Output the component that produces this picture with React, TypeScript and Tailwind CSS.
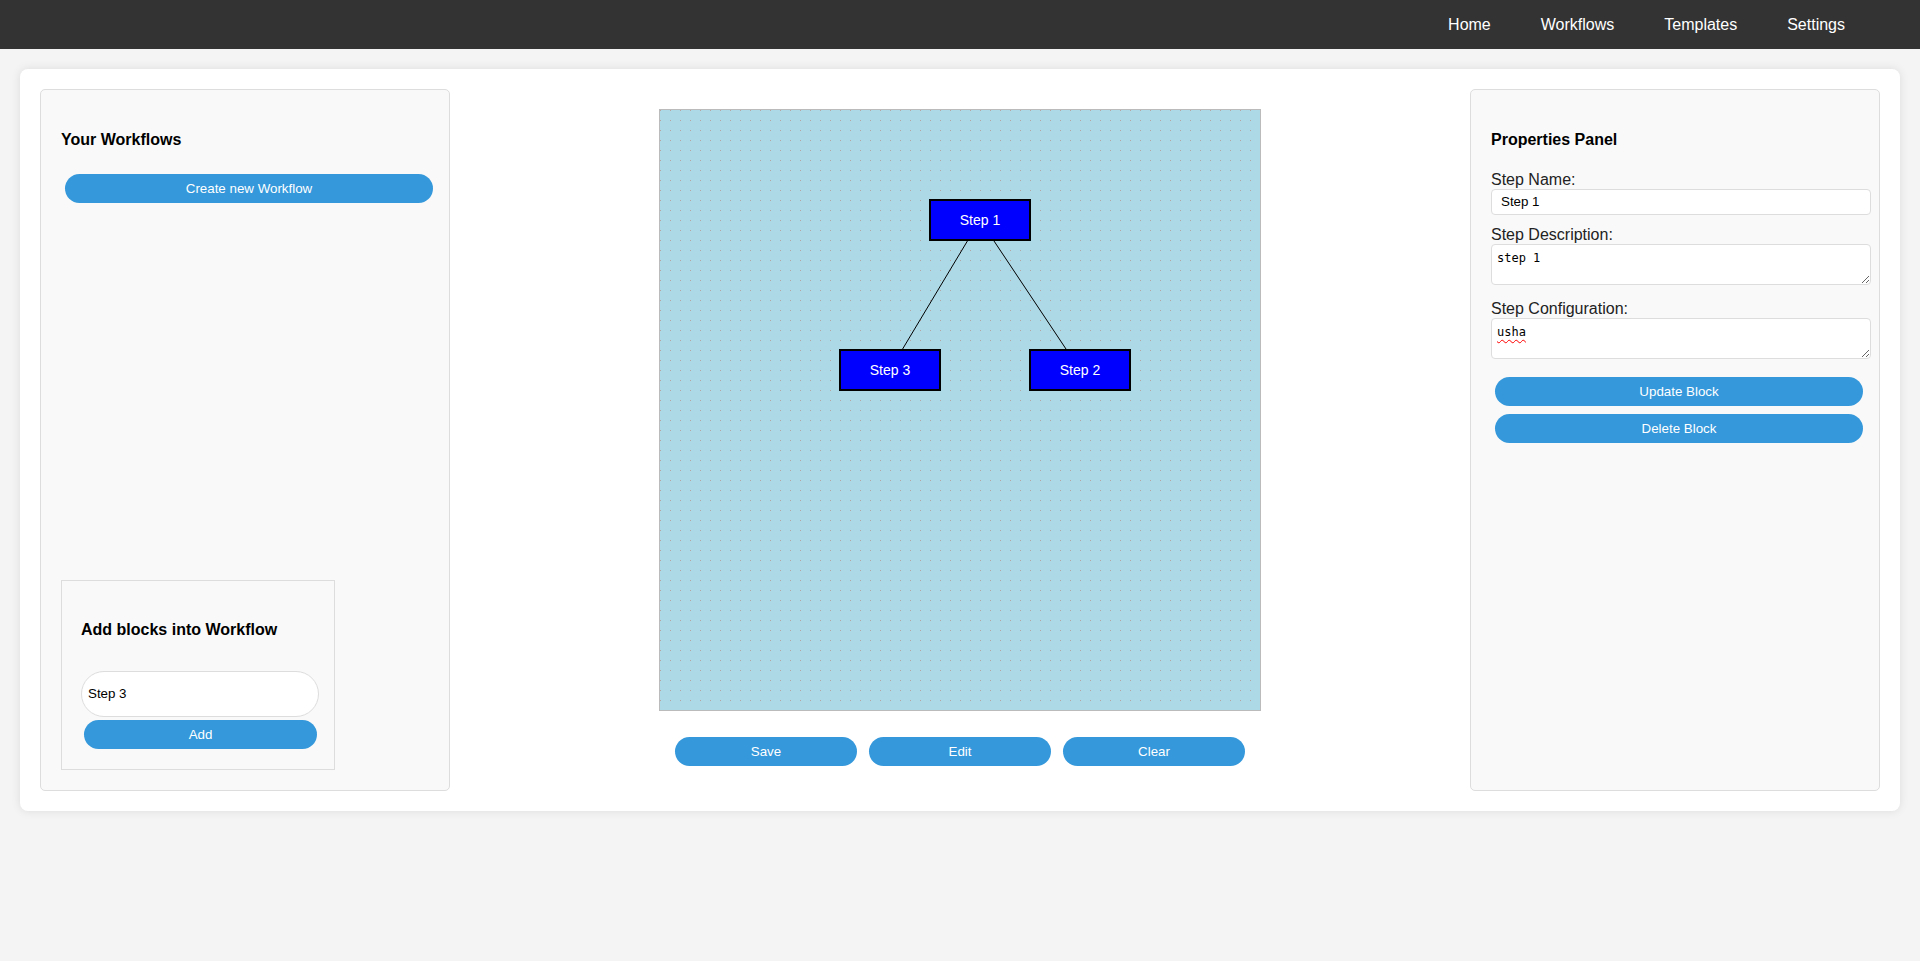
import React from "react";

function Btn({ children, className = "" }: { children: React.ReactNode; className?: string }) {
  return (
    <button
      className={
        "h-[29px] rounded-full bg-[#3498db] text-white text-[13.33px] leading-[15px] flex items-center justify-center " +
        className
      }
    >
      {children}
    </button>
  );
}

function Canvas() {
  return (
    <div className="w-[602px] h-[602px] border border-[#bbb] bg-[#add8e6]">
      <svg width="600" height="600" viewBox="0 0 600 600" className="block">
        <defs>
          <pattern id="dots" width="10" height="10" patternUnits="userSpaceOnUse">
            <rect x="0" y="0" width="1" height="1" fill="#b8a3a0" />
          </pattern>
        </defs>
        <rect x="0" y="0" width="600" height="600" fill="url(#dots)" />
        <line x1="320" y1="110" x2="230" y2="260" stroke="#000" strokeWidth="1" />
        <line x1="320" y1="110" x2="420" y2="260" stroke="#000" strokeWidth="1" />
        {[
          { x: 270, y: 90, t: "Step 1" },
          { x: 180, y: 240, t: "Step 3" },
          { x: 370, y: 240, t: "Step 2" },
        ].map((n) => (
          <g key={n.t}>
            <rect x={n.x} y={n.y} width="100" height="40" fill="#0000ff" stroke="#000" strokeWidth="2" />
            <text
              x={n.x + 50}
              y={n.y + 20}
              fill="#fff"
              fontSize="14"
              fontFamily="'Liberation Sans', Arial, sans-serif"
              textAnchor="middle"
              dominantBaseline="central"
            >
              {n.t}
            </text>
          </g>
        ))}
      </svg>
    </div>
  );
}

export default function App() {
  return (
    <div className="h-screen bg-[#f4f4f4] font-['Liberation_Sans',Arial,sans-serif] text-black">
      <nav className="h-[49px] bg-[#333] flex items-center justify-end gap-[50px] pr-[75px] text-white text-[16px] leading-[18px]">
        <span>Home</span>
        <span>Workflows</span>
        <span>Templates</span>
        <span>Settings</span>
      </nav>
      <div className="px-[20px] pt-[20px]">
        <div className="h-[742px] bg-white rounded-[8px] shadow-[0_0_10px_rgba(0,0,0,0.1)] p-[20px] flex">
          {/* Left panel */}
          <div className="w-[410px] h-full shrink-0 border border-[#ddd] rounded-[5px] bg-[#f9f9f9] p-[20px] flex flex-col">
            <h3 className="mt-[21px] text-[16px] leading-[18px] font-bold">Your Workflows</h3>
            <Btn className="mt-[25px] ml-[4px] w-[368px]">Create new Workflow</Btn>
            <div className="mt-auto w-[274px] border border-[#ddd] bg-[#f9f9f9] p-[20px] flex flex-col">
              <h3 className="mt-[20px] text-[16px] leading-[18px] font-bold -ml-[1px]">Add blocks into Workflow</h3>
              <div className="mt-[32px] -ml-[1px] w-[238px] h-[46px] rounded-[23px] border border-[#ddd] bg-white pl-[6px] flex items-center text-[13.33px]">
                Step 3
              </div>
              <Btn className="mt-[3px] ml-[2px] w-[233px]">Add</Btn>
            </div>
          </div>

          {/* Center */}
          <div className="flex-1 flex flex-col items-center pt-[20px]">
            <Canvas />
            <div className="mt-[26px] flex gap-[12px]">
              <Btn className="w-[182px]">Save</Btn>
              <Btn className="w-[182px]">Edit</Btn>
              <Btn className="w-[182px]">Clear</Btn>
            </div>
          </div>

          {/* Right panel */}
          <div className="w-[410px] h-full shrink-0 border border-[#ddd] rounded-[5px] bg-[#f9f9f9] p-[20px] flex flex-col">
            <h3 className="mt-[21px] text-[16px] leading-[18px] font-bold">Properties Panel</h3>
            <label className="mt-[22px] text-[16px] leading-[18px] text-[#222]">Step Name:</label>
            <div className="w-[380px] h-[26px] rounded-[4px] border border-[#ddd] bg-white pl-[9px] flex items-center text-[13.33px]">
              Step 1
            </div>
            <label className="mt-[11px] text-[16px] leading-[18px] text-[#222]">Step Description:</label>
            <div className="w-[380px] h-[41px] shrink-0 rounded-[4px] border border-[#ddd] bg-white px-[5px] pt-[5px] overflow-hidden resize font-['DejaVu_Sans_Mono','Liberation_Mono',monospace] text-[12px] leading-[16px]">
              step 1
            </div>
            <label className="mt-[15px] text-[16px] leading-[18px] text-[#222]">Step Configuration:</label>
            <div className="w-[380px] h-[41px] shrink-0 rounded-[4px] border border-[#ddd] bg-white px-[5px] pt-[5px] overflow-hidden resize font-['DejaVu_Sans_Mono','Liberation_Mono',monospace] text-[12px] leading-[16px]">
              <span className="underline decoration-wavy decoration-[#ff0000] decoration-1 underline-offset-[3px]">usha</span>
            </div>
            <Btn className="mt-[18px] ml-[4px] w-[368px]">Update Block</Btn>
            <Btn className="mt-[8px] ml-[4px] w-[368px]">Delete Block</Btn>
          </div>
        </div>
      </div>
    </div>
  );
}
